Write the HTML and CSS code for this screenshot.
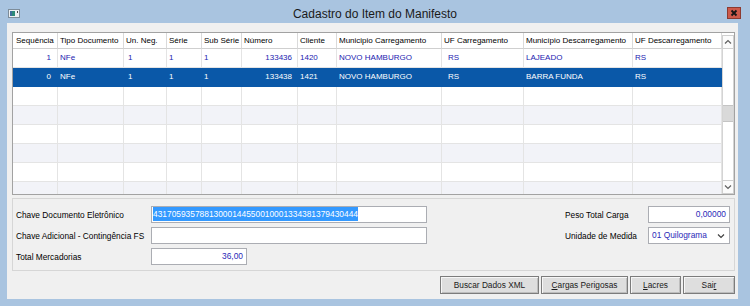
FILE: index.html
```html
<!DOCTYPE html>
<html lang="pt-BR">
<head>
    <meta charset="UTF-8">
    <meta name="viewport" content="width=device-width, initial-scale=1.0">
    <title>Cadastro do Item do Manifesto</title>
    <link rel="stylesheet" href="styles.css">
</head>
<body>
    <div class="window">
        <div class="titlebar">
            <svg class="app-icon" width="12" height="9" viewBox="0 0 12 9">
                <rect x="0.5" y="0.5" width="11" height="8" fill="#eef1f4" stroke="#7d8c99"/>
                <rect x="2" y="2" width="5" height="5" fill="#2e8a78"/>
                <rect x="2" y="2" width="2" height="5" fill="#3f6c9c"/>
                <rect x="9" y="2" width="1" height="2" fill="#4a4a4a"/>
            </svg>
            <span class="title">Cadastro do Item do Manifesto</span>
            <button class="close" type="button" aria-label="Fechar">
                <svg width="14" height="12" viewBox="0 0 14 12">
                    <rect x="0.5" y="0.5" width="13" height="11" fill="#cd5a4b" stroke="#8d3b31"/>
                    <path d="M4.5 3.5l5 5M9.5 3.5l-5 5" stroke="#151515" stroke-width="1.8"/>
                </svg>
            </button>
        </div>

        <div class="client">
            <div class="grid">
                <div class="rows">
                    <div class="row head">
                        <div class="cell first">Sequência</div>
                        <div class="cell">Tipo Documento</div>
                        <div class="cell">Un. Neg.</div>
                        <div class="cell">Série</div>
                        <div class="cell">Sub Série</div>
                        <div class="cell">Número</div>
                        <div class="cell">Cliente</div>
                        <div class="cell">Municipio Carregamento</div>
                        <div class="cell">UF Carregamento</div>
                        <div class="cell">Município Descarregamento</div>
                        <div class="cell">UF Descarregamento</div>
                    </div>
                    <div class="row data">
                        <div class="cell num seq">1</div>
                        <div class="cell">NFe</div>
                        <div class="cell unit">1</div>
                        <div class="cell">1</div>
                        <div class="cell">1</div>
                        <div class="cell num">133436</div>
                        <div class="cell">1420</div>
                        <div class="cell">NOVO HAMBURGO</div>
                        <div class="cell uf">RS</div>
                        <div class="cell">LAJEADO</div>
                        <div class="cell">RS</div>
                    </div>
                    <div class="row data selected">
                        <div class="cell num seq">0</div>
                        <div class="cell">NFe</div>
                        <div class="cell unit">1</div>
                        <div class="cell">1</div>
                        <div class="cell">1</div>
                        <div class="cell num">133438</div>
                        <div class="cell">1421</div>
                        <div class="cell">NOVO HAMBURGO</div>
                        <div class="cell uf">RS</div>
                        <div class="cell">BARRA FUNDA</div>
                        <div class="cell">RS</div>
                    </div>
                    <div class="row empty"><div class="cell"></div><div class="cell"></div><div class="cell"></div><div class="cell"></div><div class="cell"></div><div class="cell"></div><div class="cell"></div><div class="cell"></div><div class="cell"></div><div class="cell"></div><div class="cell"></div></div>
                    <div class="row empty alt"><div class="cell"></div><div class="cell"></div><div class="cell"></div><div class="cell"></div><div class="cell"></div><div class="cell"></div><div class="cell"></div><div class="cell"></div><div class="cell"></div><div class="cell"></div><div class="cell"></div></div>
                    <div class="row empty"><div class="cell"></div><div class="cell"></div><div class="cell"></div><div class="cell"></div><div class="cell"></div><div class="cell"></div><div class="cell"></div><div class="cell"></div><div class="cell"></div><div class="cell"></div><div class="cell"></div></div>
                    <div class="row empty alt"><div class="cell"></div><div class="cell"></div><div class="cell"></div><div class="cell"></div><div class="cell"></div><div class="cell"></div><div class="cell"></div><div class="cell"></div><div class="cell"></div><div class="cell"></div><div class="cell"></div></div>
                    <div class="row empty"><div class="cell"></div><div class="cell"></div><div class="cell"></div><div class="cell"></div><div class="cell"></div><div class="cell"></div><div class="cell"></div><div class="cell"></div><div class="cell"></div><div class="cell"></div><div class="cell"></div></div>
                    <div class="row empty alt"><div class="cell"></div><div class="cell"></div><div class="cell"></div><div class="cell"></div><div class="cell"></div><div class="cell"></div><div class="cell"></div><div class="cell"></div><div class="cell"></div><div class="cell"></div><div class="cell"></div></div>
                </div>
                <div class="scrollbar">
                    <div class="sb-btn">
                        <svg width="8" height="6" viewBox="0 0 8 6"><path d="M1 4.5l3-3 3 3" fill="none" stroke="#606060" stroke-width="1.2"/></svg>
                    </div>
                    <div class="sb-track">
                        <div class="sb-thumb"></div>
                    </div>
                    <div class="sb-btn">
                        <svg width="8" height="6" viewBox="0 0 8 6"><path d="M1 1.5l3 3 3-3" fill="none" stroke="#606060" stroke-width="1.2"/></svg>
                    </div>
                </div>
            </div>

            <div class="panel">
                <div class="fields">
                    <label>Chave Documento Eletrônico</label>
                    <div class="field key"><span class="selection">43170593578813000144550010001334381379430444</span></div>
                    <label>Chave Adicional - Contingência FS</label>
                    <div class="field key"></div>
                    <label>Total Mercadorias</label>
                    <div class="field total value">36,00</div>
                </div>
                <div class="fields fields-right">
                    <label>Peso Total Carga</label>
                    <div class="field value">0,00000</div>
                    <label>Unidade de Medida</label>
                    <div class="field combo">
                        <span>01 Quilograma</span>
                        <svg width="8" height="6" viewBox="0 0 8 6"><path d="M1 1.5l3 3 3-3" fill="none" stroke="#404040" stroke-width="1.2"/></svg>
                    </div>
                </div>
            </div>

            <div class="actions">
                <button type="button" class="btn-xml">Buscar Dados XML</button>
                <button type="button" class="btn-cargas"><u>C</u>argas Perigosas</button>
                <button type="button" class="btn-lacres"><u>L</u>acres</button>
                <button type="button" class="btn-sair">Sai<u>r</u></button>
            </div>
        </div>
    </div>
</body>
</html>
```

FILE: styles.css
```css
:root {
    --frame: #a9c4e0;
    --client: #f0f0f0;
    --ink: #1b1bb0;
    --line: #e4e4e4;
    --selected: #0a58a8;
    --cols: 45px 66px 43px 35px 40px 56px 39px 105px 82px 109px 89px;
}

body {
    margin: 0;
    font-family: 'Liberation Sans', Arial, sans-serif;
    color: #000;
}

.window {
    width: 750px;
    height: 306px;
    background: var(--frame);
    display: flex;
    flex-direction: column;
}

/* title bar */
.titlebar {
    height: 23px;
    display: grid;
    grid-template-columns: 1fr auto 1fr;
    align-items: start;
}

.app-icon {
    margin: 9px 0 0 8px;
}

.title {
    font-size: 12px;
    line-height: 16px;
    margin-top: 6px;
    color: #1a1a1a;
}

.close {
    justify-self: end;
    margin: 7px 9px 0 0;
    padding: 0;
    border: none;
    background: none;
    width: 14px;
    height: 12px;
    display: block;
}

.close svg {
    display: block;
}

/* client area */
.client {
    margin: 0 12px 0 7px;
    height: 276px;
    background: var(--client);
    padding: 9px 3px 0 5px;
    box-sizing: border-box;
    display: flex;
    flex-direction: column;
}

.grid {
    height: 163px;
    border: 1px solid #a2a2a2;
    box-sizing: border-box;
    background: #fff;
    display: flex;
    overflow: hidden;
    flex-shrink: 0;
}

.rows {
    width: 709px;
    overflow: hidden;
}

.row {
    display: grid;
    grid-template-columns: var(--cols);
    height: 19px;
    font-size: 8px;
}

.cell {
    border-right: 1px solid var(--line);
    border-bottom: 1px solid var(--line);
    box-sizing: border-box;
    padding: 0 2px;
    line-height: 18px;
    white-space: nowrap;
    overflow: hidden;
}

.head {
    height: 16px;
}

.head .cell {
    line-height: 15px;
    border-right-color: #dadada;
    border-bottom-color: #cfcfcf;
}

.head .first {
    padding-left: 3px;
}

.data {
    color: var(--ink);
}

.data .num {
    text-align: right;
    padding-right: 5px;
}

.data .seq {
    padding-right: 6px;
}

.data .unit {
    padding-left: 4px;
}

.data .uf {
    padding-left: 6px;
}

.selected {
    background: var(--selected);
    color: #fff;
}

.selected .cell {
    border-color: var(--selected);
}

.alt {
    background: #f2f3f8;
}

/* scrollbar */
.scrollbar {
    width: 12px;
    display: flex;
    flex-direction: column;
    background: #fff;
    padding-top: 2px;
    box-sizing: border-box;
}

.sb-btn {
    height: 14px;
    border: 1px solid #cfcfcf;
    box-sizing: border-box;
    display: flex;
    align-items: center;
    justify-content: center;
    background: #fbfbfb;
}

.sb-track {
    flex: 1;
    border-left: 1px solid #d4d4d4;
    border-right: 1px solid #d4d4d4;
    padding-top: 56px;
}

.sb-thumb {
    height: 15px;
    background: #d9d9d9;
    border-top: 1px solid #c4c4c4;
    border-bottom: 1px solid #c4c4c4;
}

/* form panel */
.panel {
    margin-top: 3px;
    height: 73px;
    border: 1px solid #d6d6d6;
    box-sizing: border-box;
    padding: 7px 4px 0 3px;
    display: flex;
    justify-content: space-between;
    flex-shrink: 0;
}

.fields {
    display: grid;
    grid-template-columns: 135px auto;
    row-gap: 4px;
    align-content: start;
    align-items: center;
    font-size: 8.3px;
}

.fields-right {
    grid-template-columns: 83px 82px;
}

.field {
    height: 17px;
    box-sizing: border-box;
    border: 1px solid #abadb3;
    background: #fff;
    padding: 0 3px 0 1px;
    line-height: 15px;
    font-size: 8.4px;
    color: #2a2ab8;
    white-space: nowrap;
    overflow: hidden;
}

.key {
    width: 276px;
}

.selection {
    background: #3399ff;
    color: #fff;
    display: inline-block;
    line-height: 14px;
}

.value {
    text-align: right;
}

.total {
    width: 96px;
}

.combo {
    display: flex;
    align-items: center;
    justify-content: space-between;
    padding: 0 4px 0 3px;
}

/* buttons */
.actions {
    margin-top: 5px;
    display: flex;
    justify-content: flex-end;
    gap: 2px;
}

.actions button {
    height: 18px;
    padding: 0;
    font-family: 'Liberation Sans', Arial, sans-serif;
    font-size: 8.3px;
    color: #1a1a1a;
    background: #dedede;
    border: 1px solid #7c7c7c;
    box-shadow: inset 1px 1px 0 #f7f7f7, inset -1px -1px 0 #bdbdbd;
}

.btn-xml {
    width: 99px;
}

.btn-cargas {
    width: 87px;
}

.btn-lacres {
    width: 51px;
}

.btn-sair {
    width: 52px;
}
```
